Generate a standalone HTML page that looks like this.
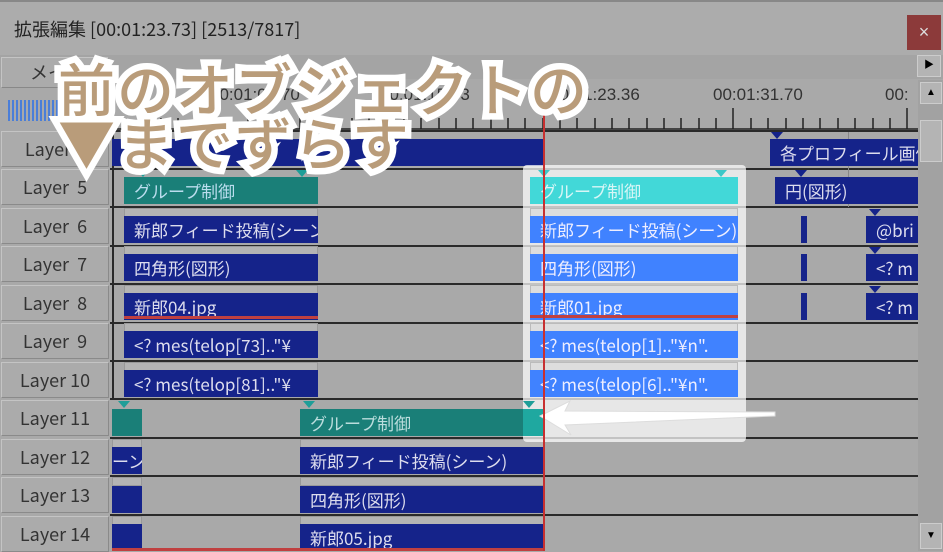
<!DOCTYPE html>
<html><head><meta charset="utf-8"><style>
*{margin:0;padding:0;box-sizing:border-box}
body{width:943px;height:551px;overflow:hidden;background:#a9a9a9;font-family:"Liberation Sans","Noto Sans CJK JP",sans-serif;position:relative}
.a{position:absolute}
.lbl{position:absolute;left:1px;width:108px;height:36px;background:#ababab;border:1px solid #c4c4c4;border-right-color:#8a8a8a;border-bottom-color:#8a8a8a;color:#333;font-size:18px;line-height:34px;text-align:center;font-family:"Noto Sans CJK JP","Liberation Sans",sans-serif}
.line{position:absolute;left:110px;width:808px;height:2px;background:#2a2a2a}
.bar{position:absolute;height:27px;color:#dde;font-size:17px;line-height:27px;padding-left:10px;white-space:nowrap;overflow:hidden;font-family:"Noto Sans CJK JP","Liberation Sans",sans-serif}
.d{background:#15238a}
.t{background:#1a7f78}
.c{background:#42d8d8;color:#d8f6f6}
.b{background:#4082ff;color:#eef}
.g{position:absolute;height:9px;background:#b4b4b4;border:1px solid #999}
.tri{position:absolute;width:0;height:0;border-left:6px solid transparent;border-right:6px solid transparent;border-top:7px solid #1e9e98}
.trd{border-top-color:#15238a}
.big{position:absolute;left:58px;font-family:"Noto Sans CJK JP",sans-serif;font-weight:500;font-size:57px;color:#b99c7a;-webkit-text-stroke:13px #fff;paint-order:stroke fill;letter-spacing:2px;white-space:nowrap}
</style></head><body>
<div class="a" style="left:0;top:0;width:943px;height:55px;background:#acacac;border-top:2px solid #888"></div>
<div class="a" style="left:14px;top:16px;font-size:18px;color:#222;font-family:'Noto Sans CJK JP','Liberation Sans',sans-serif">拡張編集 [00:01:23.73] [2513/7817]</div>
<div class="a" style="left:907px;top:15px;width:34px;height:35px;background:#8c3a3a;color:#ddd;font-size:18px;text-align:center;line-height:35px">×</div>
<div class="a" style="left:0;top:55px;width:943px;height:24px;background:#a4a4a4"></div>
<div class="a" style="left:1px;top:57px;width:108px;height:31px;background:#ababab;border:1px solid #c4c4c4;border-right-color:#888;border-bottom-color:#888;font-size:18px;color:#333;padding-left:28px;line-height:29px;font-family:'Noto Sans CJK JP',sans-serif">メイ</div>
<div class="a" style="left:917px;top:55px;width:24px;height:22px;background:#b4b4b4;border:1px solid #ccc;font-size:10px;text-align:center;line-height:20px">▶</div>
<div class="a" style="left:8px;top:100px;width:52px;height:21px;background:repeating-linear-gradient(90deg,#4a7ed8 0 2px,#a9a9a9 2px 4px)"></div>
<svg class="a" style="left:110px;top:80px" width="808" height="52">
<g fill="#333" font-size="17" font-family="Liberation Sans">
<text x="100" y="20">00:01:06.70</text><text x="270" y="20">00:01:15.03</text>
<text x="440" y="20">00:01:23.36</text><text x="603" y="20">00:01:31.70</text><text x="775" y="20">00:</text>
</g>
<g stroke="#222" stroke-width="1.5">
<line x1="0" y1="49" x2="808" y2="49"/>
<path d="M16 38V49M33 38V49M51 38V49M68 38V49M85 38V49M103 28V49M120 38V49M138 38V49M155 38V49M172 38V49M190 38V49M207 38V49M224 38V49M242 38V49M259 38V49M276 28V49M294 38V49M311 38V49M329 38V49M346 38V49M363 38V49M381 38V49M398 38V49M415 38V49M433 38V49M450 28V49M467 38V49M485 38V49M502 38V49M519 38V49M537 38V49M554 38V49M571 38V49M589 38V49M606 38V49M623 28V49M641 38V49M658 38V49M676 38V49M693 38V49M710 38V49M728 38V49M745 38V49M763 38V49M780 38V49M797 28V49"/>
</g></svg>
<div class="a" style="left:918px;top:80px;width:25px;height:471px;background:#a2a2a2"></div>
<div class="a" style="left:920px;top:82px;width:22px;height:22px;background:#b4b4b4;border:1px solid #ccc;font-size:10px;text-align:center;line-height:20px">▲</div>
<div class="a" style="left:920px;top:120px;width:22px;height:42px;background:#b4b4b4;border:1px solid #ccc"></div>
<div class="a" style="left:920px;top:523px;width:22px;height:26px;background:#b4b4b4;border:1px solid #ccc;font-size:10px;text-align:center;line-height:24px">▼</div>
<div class="lbl" style="top:131px">Layer 4</div>
<div class="lbl" style="top:169px">Layer&nbsp; 5</div>
<div class="lbl" style="top:208px">Layer&nbsp; 6</div>
<div class="lbl" style="top:246px">Layer&nbsp; 7</div>
<div class="lbl" style="top:285px">Layer&nbsp; 8</div>
<div class="lbl" style="top:323px">Layer&nbsp; 9</div>
<div class="lbl" style="top:362px">Layer 10</div>
<div class="lbl" style="top:400px">Layer 11</div>
<div class="lbl" style="top:439px">Layer 12</div>
<div class="lbl" style="top:477px">Layer 13</div>
<div class="lbl" style="top:516px">Layer 14</div>
<div class="line" style="top:130px"></div><div class="line" style="top:168px"></div><div class="line" style="top:206px"></div><div class="line" style="top:245px"></div><div class="line" style="top:283px"></div><div class="line" style="top:322px"></div><div class="line" style="top:360px"></div><div class="line" style="top:398px"></div><div class="line" style="top:437px"></div><div class="line" style="top:475px"></div><div class="line" style="top:514px"></div>
<div class="a" style="left:112px;top:130px;width:2px;height:270px;background:#2a2a2a"></div>
<div class="a" style="left:848px;top:132px;width:1px;height:75px;background:#888"></div>
<div class="bar d" style="left:112px;top:139px;width:432px"></div>
<div class="bar d" style="left:770px;top:139px;width:148px;color:#dde">各プロフィール画像</div>
<div class="tri trd" style="left:771px;top:132px"></div>
<div class="bar t" style="left:124px;top:177px;width:194px;color:#bde">グループ制御</div>
<div class="tri" style="left:137px;top:170px"></div><div class="tri" style="left:296px;top:170px"></div>
<div class="g" style="left:124px;top:208px;width:194px"></div><div class="bar d" style="left:124px;top:216px;width:194px">新郎フィード投稿(シーン)</div>
<div class="g" style="left:124px;top:246px;width:194px"></div><div class="bar d" style="left:124px;top:254px;width:194px">四角形(図形)</div>
<div class="g" style="left:124px;top:285px;width:194px"></div><div class="bar d" style="left:124px;top:293px;width:194px">新郎04.jpg</div>
<div class="a" style="left:124px;top:316px;width:194px;height:3px;background:#c04040"></div>
<div class="g" style="left:124px;top:323px;width:194px"></div><div class="bar d" style="left:124px;top:331px;width:194px">&lt;? mes(telop[73].."¥</div>
<div class="g" style="left:124px;top:362px;width:194px"></div><div class="bar d" style="left:124px;top:370px;width:194px">&lt;? mes(telop[81].."¥</div>
<div class="bar d" style="left:775px;top:177px;width:143px">円(図形)</div><div class="tri trd" style="left:795px;top:170px"></div>
<div class="bar d" style="left:801px;top:216px;width:6px;padding:0"></div><div class="bar d" style="left:801px;top:254px;width:6px;padding:0"></div><div class="bar d" style="left:801px;top:293px;width:6px;padding:0"></div>
<div class="bar d" style="left:866px;top:216px;width:52px">@bri</div><div class="tri trd" style="left:869px;top:209px"></div>
<div class="bar d" style="left:866px;top:254px;width:52px">&lt;? m</div><div class="tri trd" style="left:869px;top:247px"></div>
<div class="bar d" style="left:866px;top:293px;width:52px">&lt;? m</div><div class="tri trd" style="left:869px;top:286px"></div>
<div class="bar t" style="left:112px;top:409px;width:30px"></div><div class="tri" style="left:118px;top:401px"></div>
<div class="bar t" style="left:300px;top:409px;width:245px;color:#bdd">グループ制御</div><div class="tri" style="left:303px;top:401px"></div>
<div class="g" style="left:300px;top:439px;width:245px"></div><div class="g" style="left:112px;top:439px;width:30px"></div>
<div class="bar d" style="left:112px;top:447px;width:30px;padding:0">ーン</div>
<div class="bar d" style="left:300px;top:447px;width:245px">新郎フィード投稿(シーン)</div>
<div class="g" style="left:300px;top:477px;width:245px"></div><div class="g" style="left:112px;top:477px;width:30px"></div>
<div class="bar d" style="left:112px;top:486px;width:30px"></div>
<div class="bar d" style="left:300px;top:486px;width:245px">四角形(図形)</div>
<div class="g" style="left:300px;top:516px;width:245px"></div><div class="g" style="left:112px;top:516px;width:30px"></div>
<div class="bar d" style="left:112px;top:524px;width:30px"></div>
<div class="bar d" style="left:300px;top:524px;width:245px">新郎05.jpg</div>
<div class="a" style="left:112px;top:548px;width:433px;height:3px;background:#c04040"></div>
<div class="a" style="left:523px;top:165px;width:223px;height:277px;background:rgba(255,255,255,0.72);border-radius:4px"></div>
<div class="bar c" style="left:530px;top:177px;width:208px">グループ制御</div>
<div class="tri" style="left:538px;top:170px;border-top-color:#3cc8c8"></div><div class="tri" style="left:715px;top:170px;border-top-color:#3cc8c8"></div>
<div class="g" style="left:530px;top:208px;width:208px;background:#ddd;border-color:#bbb"></div><div class="bar b" style="left:530px;top:216px;width:208px">新郎フィード投稿(シーン)</div>
<div class="g" style="left:530px;top:246px;width:208px;background:#ddd;border-color:#bbb"></div><div class="bar b" style="left:530px;top:254px;width:208px">四角形(図形)</div>
<div class="g" style="left:530px;top:285px;width:208px;background:#ddd;border-color:#bbb"></div><div class="bar b" style="left:530px;top:293px;width:208px">新郎01.jpg</div>
<div class="a" style="left:530px;top:315px;width:208px;height:3px;background:#c04040"></div>
<div class="g" style="left:530px;top:323px;width:208px;background:#ddd;border-color:#bbb"></div><div class="bar b" style="left:530px;top:331px;width:208px">&lt;? mes(telop[1].."¥n".</div>
<div class="g" style="left:530px;top:362px;width:208px;background:#ddd;border-color:#bbb"></div><div class="bar b" style="left:530px;top:370px;width:208px">&lt;? mes(telop[6].."¥n".</div>
<div class="bar t" style="left:523px;top:409px;width:22px;padding:0;background:#1fa8a0"></div>
<div class="tri" style="left:523px;top:401px"></div>
<svg class="a" style="left:535px;top:395px" width="250" height="45"><path d="M5 21 L35 6 L30 16 L240 17 L240 21 L30 30 L36 40 Z" fill="#fff" stroke="#ddd" stroke-width="1"/></svg>
<div class="a" style="left:543px;top:90px;width:2px;height:461px;background:#c83030"></div>
<div class="big" style="top:46px">前のオブジェクトの</div>
<div class="big" style="top:100px">▼までずらす</div>
</body></html>
